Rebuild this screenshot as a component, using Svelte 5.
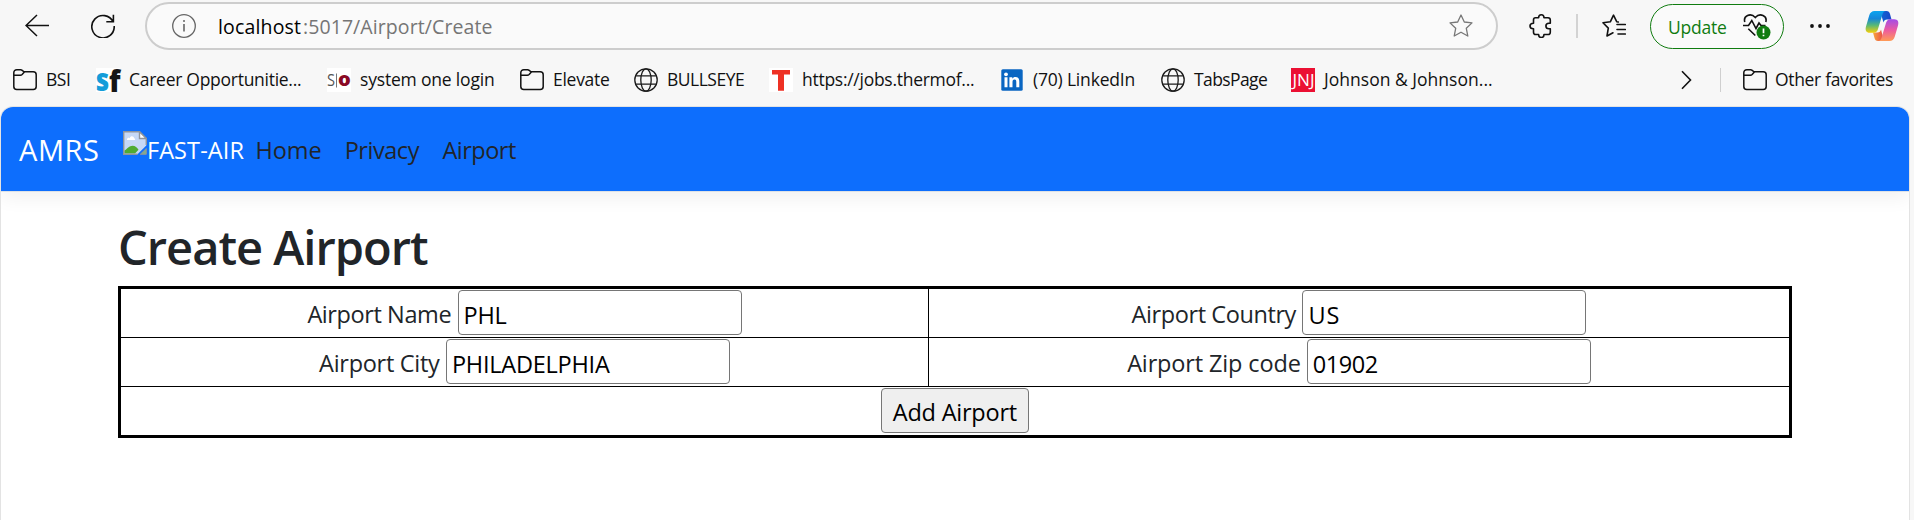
<script>
  const bookmarks = [
    { icon: 'folder', label: 'BSI', ink: 23 },
    { icon: 'sf', label: 'Career Opportunitie...', ink: 171 },
    { icon: 'so', label: 'system one login', ink: 134 },
    { icon: 'folder', label: 'Elevate', ink: 55 },
    { icon: 'globe', label: 'BULLSEYE', ink: 76 },
    { icon: 'thermo', label: 'https://jobs.thermof...', ink: 171 },
    { icon: 'linkedin', label: '(70) LinkedIn', ink: 101.5 },
    { icon: 'globe', label: 'TabsPage', ink: 73 },
    { icon: 'jnj', label: 'Johnson & Johnson...', ink: 170 }
  ];
  const links = [
    { label: 'Home', ink: 63 },
    { label: 'Privacy', ink: 73 },
    { label: 'Airport', ink: 73.5 }
  ];
  const fields = [
    { label: 'Airport Name', ink: 143, value: 'PHL', valueInk: 41 },
    { label: 'Airport Country', ink: 165, value: 'US', valueInk: 28 },
    { label: 'Airport City', ink: 121, value: 'PHILADELPHIA', valueInk: 156 },
    { label: 'Airport Zip code', ink: 172.5, value: '01902', valueInk: 64 }
  ];

  // Tracks the text so that its visible width equals the given number of pixels.
  function fit(node, width) {
    const text = node.value ?? node.textContent;
    const style = getComputedStyle(node);
    const ctx = document.createElement('canvas').getContext('2d');
    ctx.font = `${style.fontWeight} ${style.fontSize} ${style.fontFamily}`;
    const m = ctx.measureText(text);
    const ink = m.actualBoundingBoxRight + m.actualBoundingBoxLeft;
    const gap = (width - ink) / (text.length - 1);
    node.style.letterSpacing = `${gap}px`;
    if (node.tagName !== 'INPUT') node.style.marginRight = `${-gap}px`;
  }
</script>

{#snippet icon(name)}
  {#if name === 'folder'}
    <svg class="ic" viewBox="0 0 24 24" fill="none" stroke="#111" stroke-width="1.5">
      <path d="M.8 4.700a3 3 0 0 1 3-3h3.800c.7 0 1.100.2 1.600.6l1.800 1.500h9.200a3 3 0 0 1 3 3v11.700a3 3 0 0 1-3 3H3.800a3 3 0 0 1-3-3z" />
      <path d="M.8 7.200h6.500c.8 0 1.300-.2 1.800-.7L11.400 4" />
    </svg>
  {:else if name === 'globe'}
    <svg class="ic" viewBox="0 0 24 24" fill="none" stroke="#1a1a1a" stroke-width="1.3">
      <circle cx="12" cy="12" r="11.200" />
      <ellipse cx="12" cy="12" rx="5.200" ry="11.200" />
      <path d="M1.700 7.800h20.600M1.700 16.200h20.600" />
    </svg>
  {:else if name === 'sf'}
    <svg class="ic" viewBox="0 0 24 24">
      <rect width="24" height="24" fill="#fff" />
      <text x="-.3" y="23.400" class="glyph" font-size="31" fill="#149dd9" textLength="13.500" lengthAdjust="spacingAndGlyphs">s</text>
      <text x="13" y="23.600" class="glyph" font-size="30" fill="#161616" textLength="11.500" lengthAdjust="spacingAndGlyphs">f</text>
    </svg>
  {:else if name === 'so'}
    <svg class="ic" viewBox="0 0 24 24">
      <rect width="24" height="24" fill="#fff" />
      <text x="0" y="17.500" class="glyph thin" font-size="16" fill="#555" textLength="8" lengthAdjust="spacingAndGlyphs">S</text>
      <path d="M9.500 5.500v14" stroke="#777" stroke-width="1" />
      <text x="11" y="17.500" class="glyph" font-size="20" fill="#8a0a24" textLength="12.800" lengthAdjust="spacingAndGlyphs">o</text>
    </svg>
  {:else if name === 'thermo'}
    <svg class="ic" viewBox="0 0 24 24">
      <rect width="24" height="24" fill="#fff" />
      <path d="M3 2h18v4.500h-6v16.200H9V6.500H3z" fill="#ee3124" />
    </svg>
  {:else if name === 'linkedin'}
    <svg class="ic" viewBox="0 0 24 24">
      <rect x="1.300" y="1.300" width="21.400" height="21.400" rx="1.500" fill="#0a66c2" />
      <g fill="#fff">
        <circle cx="6" cy="6.300" r="1.900" />
        <path d="M4.500 9.300h3v10h-3zM9.400 9.300h2.900v1.400c.6-1 1.700-1.700 3.200-1.700 3.100 0 3.800 2 3.800 4.700v5.600h-3v-5c0-1.300-.1-2.700-1.800-2.700s-2 1.300-2 2.700v5H9.400z" />
      </g>
    </svg>
  {:else if name === 'jnj'}
    <svg class="ic" viewBox="0 0 24 24">
      <rect width="24" height="24" fill="#eb1033" />
      <text x="1.500" y="18" class="glyph thin" font-size="16.500" fill="#fff" textLength="22" lengthAdjust="spacingAndGlyphs">JNJ</text>
    </svg>
  {/if}
{/snippet}

<div class="window">
  <div class="toolbar">
    <svg class="back" width="24" height="24" viewBox="0 0 24 24" fill="none" stroke="#111" stroke-width="1.500">
      <path d="M12 1 1 11.500l11 10.500M1 11.500h23" />
    </svg>
    <svg class="reload" width="24" height="24" viewBox="0 0 24 24" fill="none" stroke="#111" stroke-width="1.600">
      <path d="M22.200 8A11.200 11.200 0 1 0 23.200 12M22.400.7v7.100h-7.100" />
    </svg>
    <div class="address">
      <svg width="24" height="24" viewBox="0 0 24 24" fill="none" stroke="#666" stroke-width="1.300">
        <circle cx="12" cy="12" r="11.300" />
        <path d="M12 10v7.500" stroke-width="1.600" />
        <circle cx="12" cy="7" r="1" fill="#666" stroke="none" />
      </svg>
      <span class="host" use:fit={82}>localhost</span><span class="path" use:fit={187.5}>:5017/Airport/Create</span>
      <svg class="star" width="24" height="24" viewBox="0 0 24 24" fill="none" stroke="#777" stroke-width="1.300" stroke-linejoin="round">
        <path d="m12 1 3.300 7 7.700.9-5.700 5.400 1.500 7.700-6.800-3.800L5.200 22l1.500-7.700L1 8.900 8.700 8z" />
      </svg>
    </div>
    <svg class="puzzle" width="24" height="24" viewBox="0 0 24 24" fill="none" stroke="#111" stroke-width="1.600" stroke-linejoin="round">
      <path d="M6.500 3.800h3.100c0-1.800 1.200-3 2.700-3s2.700 1.200 2.700 3h4q2.300 0 2.300 2.300v3.200h-1.400c-1.800 0-3 1.200-3 2.700s1.200 2.700 3 2.700h1.400v3.500q0 2.300-2.300 2.300h-4c0 1.800-1.200 3-2.700 3s-2.700-1.200-2.700-3H6.800q-2.300 0-2.300-2.300v-3.500C2.300 14.700 1 13.500 1 12s1.300-2.700 3.500-2.700V6q0-2.200 2-2.200z" />
    </svg>
    <i class="sep first"></i>
    <svg class="favs" width="24" height="24" viewBox="0 0 24 24" fill="none" stroke="#111" stroke-width="1.600" stroke-linejoin="round" stroke-linecap="round">
      <path d="M16.300 8 14.700 7.700 11.500 1.200 8.300 7.800l-7.300 1 5.300 5.300L5 22l6-3.200M15 10.500h8.300M15 15.500h8.300M16 20h7.300" />
    </svg>
    <div class="update">
      <span use:fit={57}>Update</span>
      <svg width="28" height="27" viewBox="0 0 28 27" fill="none" stroke="#111" stroke-width="1.600">
        <path d="M1.800 9C0 3 7.500-.8 12.300 4.500 17-.8 24.600 3 22.800 9M0 12.500h5.500l3.300-5 4.200 8 3-5.500 2 2.500h4.500M5.300 15.700 12.300 22.500" />
        <circle cx="20.500" cy="19.500" r="7" fill="#107c10" stroke="none" />
        <path d="M20.500 15.500v4.800M20.500 21.700v1.600" stroke="#fff" stroke-width="1.700" />
      </svg>
    </div>
    <svg class="more" width="22" height="6" viewBox="0 0 22 6" fill="#111">
      <circle cx="3" cy="3" r="1.900" /><circle cx="11" cy="3" r="1.900" /><circle cx="19" cy="3" r="1.900" />
    </svg>
    <svg class="copilot" width="34" height="32" viewBox="0 0 34 32">
      <defs>
        <linearGradient id="a" x1="0" y1="0" x2="0" y2="1"><stop offset="0" stop-color="#0aa5f0" /><stop offset=".35" stop-color="#1686d8" /><stop offset=".65" stop-color="#56b878" /><stop offset="1" stop-color="#f5cf0a" /></linearGradient>
        <linearGradient id="b" x1="0" y1="0" x2="0" y2="1"><stop offset="0" stop-color="#a24be8" /><stop offset=".5" stop-color="#ec5aa0" /><stop offset="1" stop-color="#ff9b55" /></linearGradient>
        <linearGradient id="c"><stop offset="0" stop-color="#1268d4" /><stop offset="1" stop-color="#1947c8" /></linearGradient>
        <linearGradient id="d"><stop offset="0" stop-color="#f8a63c" /><stop offset="1" stop-color="#e8454a" /></linearGradient>
      </defs>
      <path d="M15 1h6.500c2 0 3 1.200 3.500 3l1.500 5.500H22c-2 0-3 1-3.500 3z" fill="url(#c)" />
      <path d="M19 31h-6c-2 0-3-1.200-3.500-3L8 22.500h4.500c2 0 3-1 3.500-3z" fill="url(#d)" />
      <path d="M9.500 1H21c-2 0-3 1.500-3.600 3.500L13 19c-.8 2.500-2 3.800-4.500 3.800H4.800C1 22.800 0 20 1 16.500l3.200-11C5 2.500 7 1 9.500 1z" fill="url(#a)" />
      <path d="M24.500 31H13c2 0 3-1.500 3.600-3.500L21 13c.8-2.500 2-3.800 4.500-3.800h3.700c3.800 0 4.800 2.800 3.800 6.300l-3.200 11c-.8 3-2.800 4.500-5.300 4.500z" fill="url(#b)" />
    </svg>
  </div>

  <div class="bookmarks">
    <div class="items">
      {#each bookmarks as b}
        <div class="bookmark">{@render icon(b.icon)}<span use:fit={b.ink}>{b.label}</span></div>
      {/each}
    </div>
    <svg class="chevron" width="12" height="20" viewBox="0 0 12 20" fill="none" stroke="#111" stroke-width="1.600">
      <path d="m2 1.200 8.500 8.800L2 18.800" />
    </svg>
    <i class="sep"></i>
    <div class="bookmark">{@render icon('folder')}<span use:fit={117}>Other favorites</span></div>
  </div>

  <div class="page">
    <nav>
      <span class="brand" use:fit={79}>AMRS</span>
      <span class="logo">
        <svg width="24" height="24" viewBox="0 0 24 24">
          <path d="M.7.700h15.800L23.300 7.500v7L14.500 23.300H.7z" fill="#c6d8f6" />
          <path d="M4 8.500c0-2 2.200-2.200 2.700-1.200C7.500 4.300 11 5 11 7.200c1.500 0 1.500 1.800.5 1.800H4z" fill="#fff" />
          <path d="M1.400 22.600v-3C4 18 6.500 14.800 9.500 14.800c2.700 0 4.800 2 6 4l-3.500 3.800z" fill="#4fab32" />
          <path d="M14.500 23.300H.7V.7h15.800L23.300 7.500v6.500" fill="none" stroke="#8f949b" stroke-width="1.400" />
          <path d="M23.300 17.500v5.800h-6z" fill="#7fae8b" stroke="#8f949b" />
          <path d="M16.500.7v6.800h6.800z" fill="#fff" stroke="#8f949b" stroke-width="1.400" />
        </svg><span class="alt" use:fit={95.5}>FAST-AIR</span>
      </span>
      <div class="links">
        {#each links as l}<span use:fit={l.ink}>{l.label}</span>{/each}
      </div>
    </nav>
    <main>
      <h1><span use:fit={308}>Create Airport</span></h1>
      <form class="table">
        {#each fields as f}
          <label class="cell"><span use:fit={f.ink}>{f.label}</span><input value={f.value} use:fit={f.valueInk} /></label>
        {/each}
        <div class="cell wide"><button type="button"><span use:fit={124}>Add Airport</span></button></div>
      </form>
    </main>
  </div>
</div>

<style>
  :global(body) { margin: 0; overflow: hidden; }
  .window {
    box-sizing: border-box; width: 1914px; height: 520px; overflow: hidden;
    display: flex; flex-direction: column; background: #f7f7f7;
    font-family: "Open Sans", "Noto Sans", sans-serif; color: #111;
  }
  svg { display: block; flex: none; }
  span { white-space: nowrap; }
  .toolbar { height: 52px; flex: none; display: flex; align-items: center; padding-left: 25px; }
  .back { margin-right: 42px; }
  .reload { margin-right: 30px; }
  .address {
    box-sizing: border-box; width: 1353px; height: 48px; border: 2px solid #cdcdcd; border-radius: 24px;
    background: #fafafa; display: flex; align-items: center; padding: 0 23px 0 25px; font-size: 19.500px;
  }
  .host { margin-left: 22px; color: #000; }
  .path { padding-left: 2px; color: #757575; }
  .star { margin-left: auto; }
  .puzzle { margin-left: 31px; }
  .sep { width: 1px; height: 24px; background: #cfcfcf; flex: none; }
  .first { width: 2px; margin: 0 24px 0 23px; background: #d3d3d3; }
  .update {
    box-sizing: border-box; width: 134px; height: 45px; margin-left: 24px; padding: 1px 10px 0 17px;
    border: 1.500px solid #107c10; border-radius: 23px; background: #fafafa;
    display: flex; align-items: center; justify-content: space-between;
    font-size: 17.500px; color: #107c10;
  }
  .update svg { margin-right: 2px; }
  .more { margin-left: 25px; }
  .copilot { margin-left: 34px; }
  .bookmarks {
    box-sizing: border-box; height: 55px; flex: none; display: flex; align-items: flex-start;
    padding: 16px 20px 0 13px; font-size: 17.500px;
  }
  .items { display: grid; grid-template-columns: 83px 231px 193px 114px 135px 231px 161px 130px 1fr; width: 1520px; }
  .bookmark { display: flex; align-items: center; gap: 9px; height: 24px; }
  .bookmark span { margin-top: -2px; }
  .ic { width: 24px; height: 24px; overflow: visible; }
  .glyph { font-family: "Open Sans", sans-serif; font-weight: 800; }
  .thin { font-weight: 500; }
  .chevron { margin: 2px 28px 0 147px; }
  .bookmarks > .bookmark { margin-left: 22px; gap: 8px; }
  .page {
    flex: 1; width: 1908px; margin-left: 1px; background: #fff; border-radius: 12px 12px 0 0;
    box-shadow: 0 0 0 1px #e3e3e3; overflow: hidden;
  }
  nav {
    height: 84px; display: flex; align-items: center; background: #0d6efd; padding-left: 18px;
    border-bottom: 1px solid #dee2e6; box-shadow: 0 6px 18px rgba(0, 0, 0, .06); color: #fff;
  }
  .brand { font-size: 29px; }
  .logo { display: flex; margin-left: 24px; height: 34px; font-size: 23.500px; line-height: 36px; }
  .logo svg { margin-top: -1px; }
  .links { display: flex; gap: 23px; margin-left: 11.500px; padding-top: 2px; font-size: 23.500px; color: #212529; }
  main { padding: 27px 117px 0; }
  h1 { margin: 0; height: 67px; line-height: 56px; font-size: 47px; font-weight: 600; color: #212529; }
  .table {
    box-sizing: border-box; width: 1674px; height: 152px; border: 3px solid #000; background: #000;
    display: grid; grid-template-columns: 807px 860px; grid-template-rows: 48px 48px 48px; gap: 1px;
  }
  .cell {
    box-sizing: border-box; background: #fff; display: flex; align-items: flex-start; justify-content: center;
    gap: 6px; padding-top: 1px; font-size: 23.500px; color: #212529; line-height: 45px;
  }
  .cell > span { padding-top: 2px; }
  .wide { grid-column: 1 / -1; }
  input, button {
    box-sizing: border-box; height: 45px; font: inherit; color: #000; border: 1px solid #767676; border-radius: 4px;
    outline: none;
  }
  input { width: 284px; padding: 4px 5px 0; background: #fff; line-height: normal; }
  button { width: 148px; padding: 4px 0 0; line-height: 39px; background: #efefef; }
</style>
